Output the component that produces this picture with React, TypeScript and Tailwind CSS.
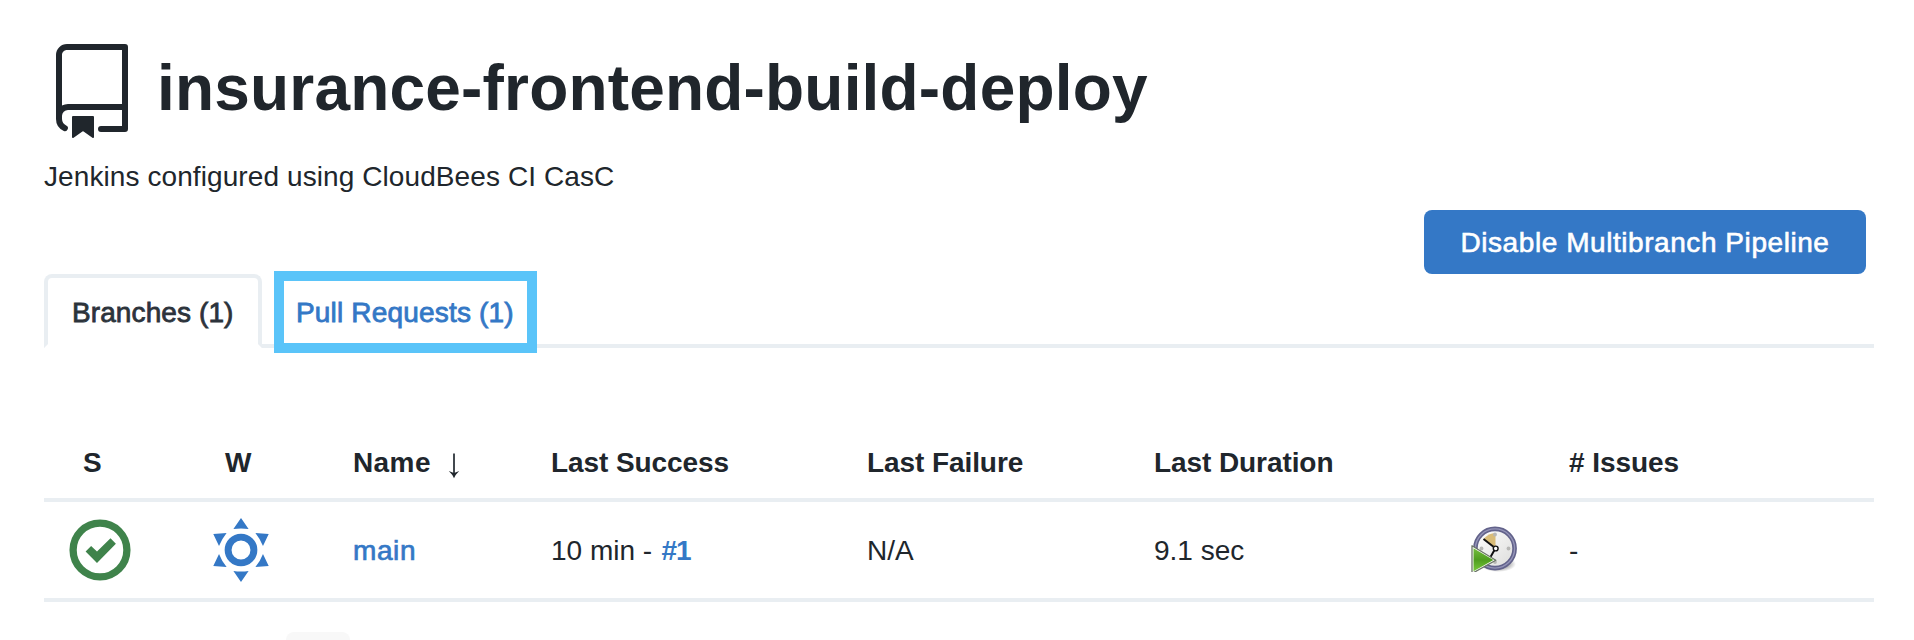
import React from "react";

const RepoIcon = () => (
  <svg viewBox="0 0 24 24" className="size-24 shrink-0" fill="currentColor">
    <path d="M3 2.75A2.75 2.75 0 0 1 5.75 0h14.5a.75.75 0 0 1 .75.75v20.5a.75.75 0 0 1-.75.75h-6a.75.75 0 0 1 0-1.5h5.25v-4H6A1.5 1.5 0 0 0 4.5 18v.75c0 .716.43 1.334 1.05 1.605a.75.75 0 0 1-.6 1.374A3.251 3.251 0 0 1 3 18.75ZM19.5 1.5H5.75c-.69 0-1.25.56-1.25 1.25v12.651A2.989 2.989 0 0 1 6 15h13.5Z" />
    <path d="M7 18.25a.25.25 0 0 1 .25-.25h5a.25.25 0 0 1 .25.25v5.01a.25.25 0 0 1-.397.201l-2.206-1.604a.25.25 0 0 0-.294 0L7.397 23.46a.25.25 0 0 1-.397-.2v-5.01Z" />
  </svg>
);

const SuccessIcon = () => (
  <svg viewBox="-32 -32 64 64" className="ml-6 size-16">
    <circle r="26.9" fill="none" stroke="#3f834b" strokeWidth="7.3" />
    <path d="M-14.4 1.5-8.9-3.9-3 1.6 10.5-11.8 15.9-6.3-3 12.9Z" fill="#3f834b" />
  </svg>
);

const rays = [0, 60, 120, 180, 240, 300];

const SunIcon = () => (
  <svg viewBox="-32 -32 64 64" className="-ml-[3px] size-16">
    <circle r="12.9" fill="none" stroke="#3478c6" strokeWidth="6.9" />
    {rays.map((angle) => (
      <path key={angle} d="M0-32 7.6-21Q0-22.2-7.6-21Z" fill="#3478c6" transform={`rotate(${angle})`} />
    ))}
  </svg>
);

const ArrowDown = () => (
  <svg viewBox="0 0 12 26" className="ml-[17px] mt-[6px] h-[26px] w-3" fill="none">
    <path d="M6 .5V22" stroke="#43494f" strokeWidth="2" />
    <path d="M.8 18Q4.5 19.4 6 20 7.5 19.4 11.2 18 7.5 21.5 6 25.2 4.5 21.5.8 18Z" fill="#20262c" />
  </svg>
);

const ScheduleIcon = () => (
  <svg viewBox="0 0 48 48" className="-mt-1 size-12">
    <defs>
      <linearGradient id="face" x1="0" y1="0" x2="1" y2="1">
        <stop offset="0" stopColor="#ffffff" />
        <stop offset="1" stopColor="#dcdcda" />
      </linearGradient>
      <linearGradient id="play" x1="0" y1="0" x2="0" y2="1">
        <stop offset="0" stopColor="#73bd3c" />
        <stop offset="0.5" stopColor="#4f9d1f" />
        <stop offset="1" stopColor="#75c838" />
      </linearGradient>
      <radialGradient id="shade">
        <stop offset="0.6" stopColor="#000" stopOpacity="0.3" />
        <stop offset="1" stopColor="#000" stopOpacity="0" />
      </radialGradient>
    </defs>
    <ellipse cx="27" cy="40" rx="18" ry="8" fill="url(#shade)" />
    <circle cx="24" cy="24.5" r="19.6" fill="url(#face)" stroke="#62628a" strokeWidth="4.6" />
    <circle cx="24" cy="24.5" r="19.6" fill="none" stroke="#9494b8" strokeWidth="1.4" />
    <path d="M24.5 24.5 12.5 15Q17.5 9 24.5 9Z" fill="#d9bc78" />
    <g fill="#b7b7b5">
      <circle cx="24" cy="10.5" r="1.9" />
      <circle cx="37.5" cy="24.5" r="1.9" />
      <circle cx="10.5" cy="24.5" r="1.9" />
      <circle cx="24" cy="38" r="1.9" />
    </g>
    <path d="M22.5 22.8 12.5 15M23.2 26.5 19.5 33" stroke="#111" strokeWidth="2" />
    <circle cx="24.7" cy="24.5" r="2.4" fill="#fff" stroke="#111" strokeWidth="1.4" />
    <path d="M1 21.3V49L24.8 35.7Z" transform="translate(0 .5)" fill="#fff" stroke="#6a7564" strokeWidth="1.3" strokeLinejoin="round" />
    <path d="M2.5 24.3V47.2L22.4 36Z" fill="url(#play)" />
  </svg>
);

const columns = "grid grid-cols-[168px_141px_198px_316px_287px_317px_98px_305px]";

export default function App() {
  return (
    <main className="h-[640px] w-[1914px] overflow-hidden bg-white pl-11 pr-10 pt-11 font-['Liberation_Sans',Arial,sans-serif] text-[28px] leading-8 text-[#20262c]">
      <header className="flex h-24">
        <RepoIcon />
        <h1 className="ml-[17px] mt-[7px] whitespace-nowrap text-[64px] font-bold leading-[74px] tracking-[0.19px]">
          insurance-frontend-build-deploy
        </h1>
      </header>
      <p className="mt-[21px] h-[31px] whitespace-nowrap tracking-[0.09px]">
        Jenkins configured using CloudBees CI CasC
      </p>
      <div className="mr-2 mt-[18px] flex justify-end">
        <button className="h-16 w-[442px] whitespace-nowrap rounded-lg bg-[#3478c6] pt-0.5 tracking-[0.56px] text-white [-webkit-text-stroke:0.6px_currentColor]">
          Disable Multibranch Pipeline
        </button>
      </div>
      <nav className="-mt-[3px] flex h-[82px]">
        <div className="mt-[3px] h-[74px] w-[218px] whitespace-nowrap rounded-t-lg border-4 border-[#e9eef2] border-b-white pl-[24px] pt-[19px] tracking-[0.1px] text-[#2c333b] [-webkit-text-stroke:0.8px_currentColor]">
          Branches (1)
        </div>
        <div className="mt-[73px] h-1 w-3 bg-[#e9eef2]" />
        <a className="h-[82px] w-[263px] whitespace-nowrap border-10 border-[#5ac4f9] pl-3 pt-4 tracking-[0.18px] text-[#3478c6] [-webkit-text-stroke:0.8px_currentColor]">
          Pull Requests (1)
        </a>
        <div className="mt-[73px] h-1 flex-1 bg-[#e9eef2]" />
      </nav>
      <section className="mt-[67px]">
        <div className={`${columns} h-[82px] whitespace-nowrap border-b-4 border-[#e9eef2] pt-[27px] font-bold tracking-[-0.08px]`}>
          <span className="pl-[39px]">S</span>
          <span className="pl-[13px]">W</span>
          <span className="flex tracking-[0.4px]"><span>Name</span><ArrowDown /></span>
          <span>Last Success</span>
          <span>Last Failure</span>
          <span>Last Duration</span>
          <span />
          <span># Issues</span>
        </div>
        <div className={`${columns} h-[100px] items-center whitespace-nowrap border-b-4 border-[#e9eef2]`}>
          <SuccessIcon />
          <SunIcon />
          <a className="pt-0.5 tracking-[0.6px] text-[#3478c6] [-webkit-text-stroke:0.7px_currentColor]">main</a>
          <span className="pt-0.5">10 min - <a className="ml-[1.5px] font-bold tracking-[-1px] text-[#3478c6]">#1</a></span>
          <span className="pt-0.5">N/A</span>
          <span className="pt-0.5">9.1 sec</span>
          <ScheduleIcon />
          <span className="pt-0.5">-</span>
        </div>
      </section>
      <div className="ml-[242px] mt-[30px] h-8 w-16 rounded-lg bg-[#f8f8f8]" />
    </main>
  );
}
